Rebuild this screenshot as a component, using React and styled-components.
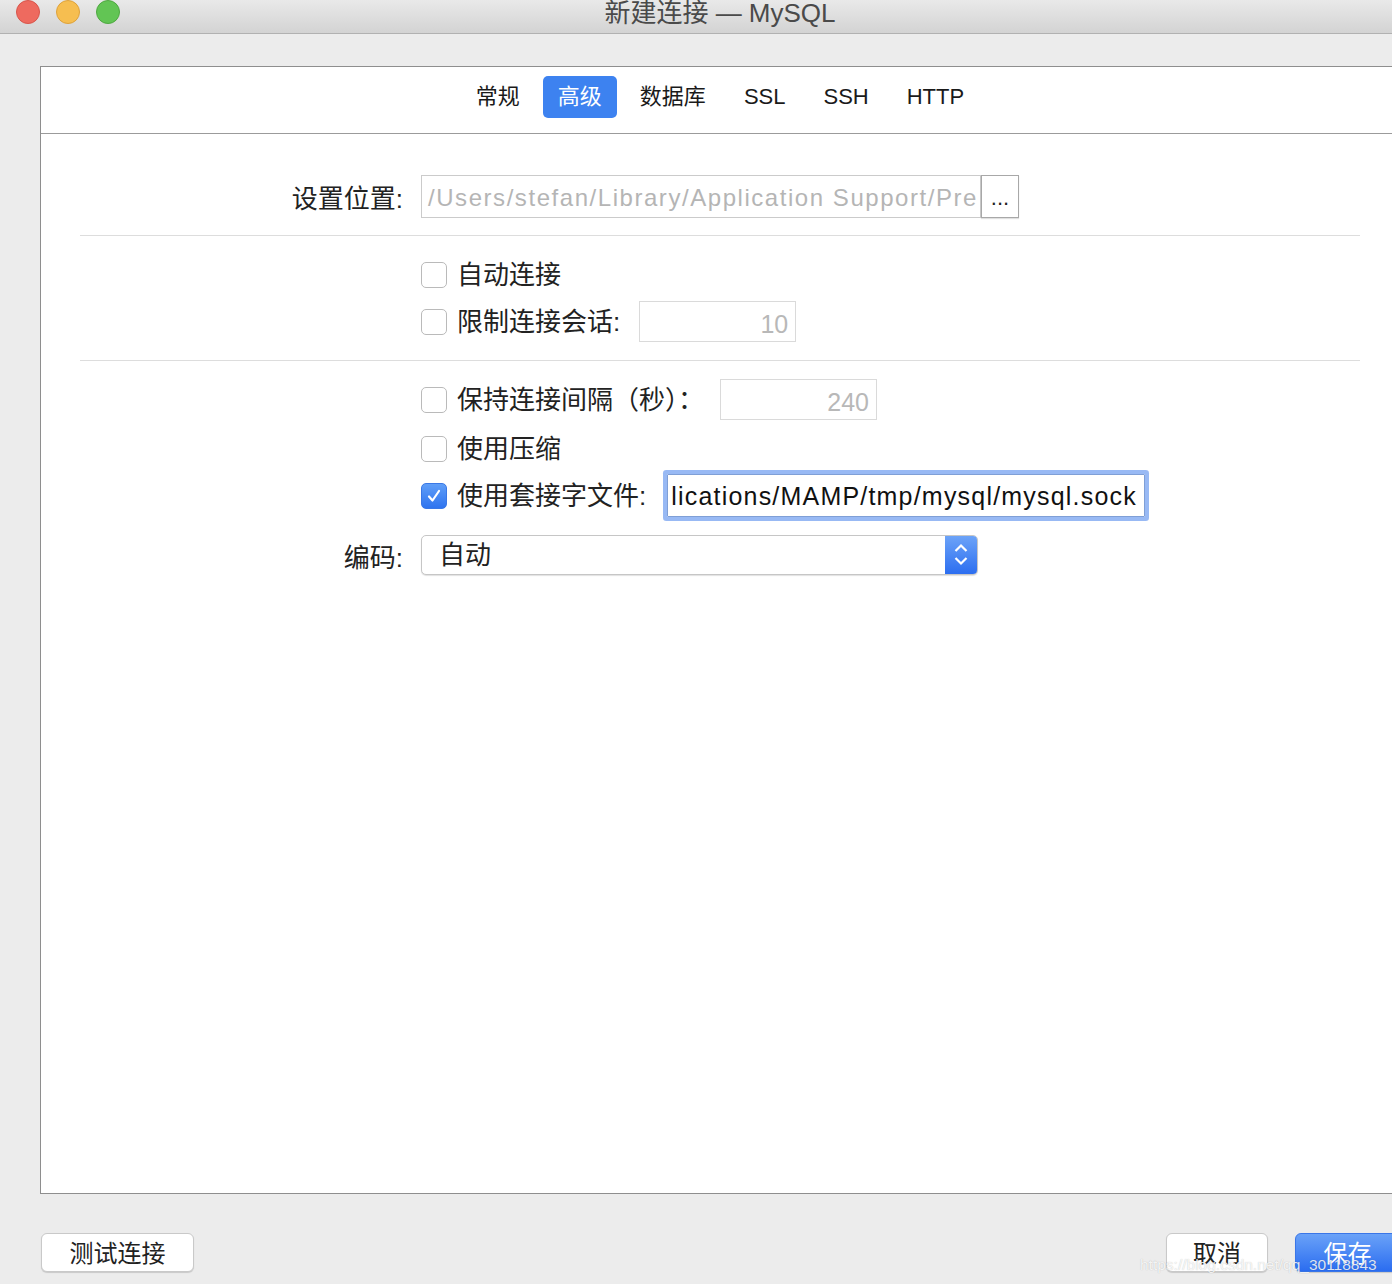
import React from 'react';
import styled, { createGlobalStyle } from 'styled-components';

const GlobalStyle = createGlobalStyle`
  html, body {
    margin: 0;
    padding: 0;
    background: #ececec;
    overflow: hidden;
  }
  body {
    font-family: "Liberation Sans", "Noto Sans CJK SC", sans-serif;
    color: #222;
  }
`;

const Window = styled.div`
  position: relative;
  width: 1440px;
  height: 1284px;
  display: flex;
  flex-direction: column;
  background: #ececec;
`;

const TitleBar = styled.div`
  height: 33px;
  flex-shrink: 0;
  display: grid;
  grid-template-columns: 1fr auto 1fr;
  align-items: start;
  border-bottom: 1px solid #b1b1b1;
  background: linear-gradient(#e9e9e9, #d3d3d3);
  overflow: hidden;
`;

const Lights = styled.div`
  display: flex;
  gap: 16px;
  padding-left: 16px;
`;

const Light = styled.span`
  width: 24px;
  height: 24px;
  border-radius: 50%;
  box-sizing: border-box;
  background: ${p => p.$c};
  border: 1px solid ${p => p.$b};
`;

const Title = styled.div`
  font-size: 26px;
  line-height: 26px;
  color: #4a4a4a;
`;

const Panel = styled.div`
  margin: 32px 40px 0;
  height: 1128px;
  box-sizing: border-box;
  background: #fff;
  border: 1px solid #8e8e8e;
  display: flex;
  flex-direction: column;
`;

const TabBar = styled.div`
  height: 67px;
  box-sizing: border-box;
  border-bottom: 1px solid #9b9b9b;
  display: flex;
  justify-content: center;
  align-items: flex-start;
  padding-top: 9px;
  gap: 8px;
`;

const Tab = styled.div`
  height: 42px;
  line-height: 42px;
  padding: 0 15px;
  font-size: 22px;
  border-radius: 5px;
  color: ${p => (p.$active ? '#fff' : '#1a1a1a')};
  background: ${p => (p.$active ? '#3d82f0' : 'transparent')};
`;

const Form = styled.div`
  display: flex;
  flex-direction: column;
  padding: 41px 39px 0;
`;

const Row = styled.div`
  display: grid;
  grid-template-columns: 323px 1fr;
  column-gap: 18px;
  align-items: center;
  height: ${p => p.$h}px;
  margin-top: ${p => p.$mt || 0}px;
`;

const Label = styled.div`
  text-align: right;
  font-size: 26px;
  color: #222;
`;

const Field = styled.div`
  display: flex;
  align-items: center;
  height: 100%;
`;

const Divider = styled.div`
  height: 1px;
  background: #dddddd;
  margin-top: ${p => p.$mt}px;
`;

const PathInput = styled.div`
  width: 560px;
  height: 43px;
  box-sizing: border-box;
  border: 1px solid #cbcbcb;
  padding-left: 6px;
  font-size: 24px;
  line-height: 43px;
  letter-spacing: 1.55px;
  color: #b5b5b5;
  white-space: nowrap;
  overflow: hidden;
`;

const DotsButton = styled.div`
  width: 38px;
  height: 43px;
  box-sizing: border-box;
  border: 1px solid #a8a8a8;
  background: #fff;
  box-shadow: 0 1px 1px rgba(0, 0, 0, 0.12);
  font-size: 22px;
  line-height: 44px;
  text-align: center;
  color: #222;
`;

const Box = styled.span`
  width: 26px;
  height: 26px;
  box-sizing: border-box;
  border-radius: 5px;
  flex-shrink: 0;
  display: flex;
  align-items: center;
  justify-content: center;
  border: 1px solid ${p => (p.$checked ? '#3a78e6' : '#bababa')};
  background: ${p => (p.$checked ? 'linear-gradient(#5f9ef8, #2f74ef)' : '#fff')};
`;

const CheckText = styled.span`
  margin-left: 10px;
  font-size: 26px;
  line-height: 30px;
  color: #222;
  white-space: nowrap;
`;

const NumberInput = styled.div`
  width: 157px;
  height: 41px;
  box-sizing: border-box;
  margin-left: ${p => p.$ml}px;
  border: 1px solid #dadada;
  padding-right: 7px;
  text-align: right;
  font-size: 25px;
  line-height: 44px;
  color: #b8b8b8;
`;

const SocketInput = styled.div`
  width: 478px;
  height: 43px;
  box-sizing: border-box;
  margin-left: 21px;
  border: 1px solid #7f9fd6;
  box-shadow: 0 0 0 4px #98b9f4;
  border-radius: 1px;
  padding-left: 3px;
  font-size: 25px;
  line-height: 43px;
  letter-spacing: 1.2px;
  color: #111;
  white-space: nowrap;
  overflow: hidden;
`;

const Select = styled.div`
  width: 557px;
  height: 40px;
  box-sizing: border-box;
  display: flex;
  border-radius: 5px;
  border: 1px solid #c6c6c6;
  box-shadow: 0 1px 1px rgba(0, 0, 0, 0.12);
  background: #fff;
  overflow: hidden;
`;

const SelectValue = styled.span`
  flex: 1;
  padding-left: 17px;
  font-size: 26px;
  line-height: 38px;
  color: #222;
`;

const Stepper = styled.span`
  width: 32px;
  display: flex;
  align-items: center;
  justify-content: center;
  background: linear-gradient(#6ca3f8, #2c6ef0);
`;

const Footer = styled.div`
  display: flex;
  justify-content: space-between;
  padding: 39px 40px 0 41px;
`;

const ButtonGroup = styled.div`
  display: flex;
  gap: 27px;
`;

const Button = styled.div`
  width: ${p => p.$w}px;
  height: 39px;
  box-sizing: border-box;
  border-radius: 6px;
  text-align: center;
  font-size: 24px;
  line-height: 39px;
  border: 1px solid ${p => (p.$primary ? '#3a76e8' : '#c9c9c9')};
  background: ${p => (p.$primary ? 'linear-gradient(#6aa2f8, #2b6df0)' : '#fff')};
  color: ${p => (p.$primary ? '#fff' : '#222')};
  box-shadow: 0 1px 1px rgba(0, 0, 0, 0.15);
`;

const Watermark = styled.div`
  position: absolute;
  left: 1140px;
  top: 1254px;
  font-size: 15.5px;
  line-height: 22px;
  color: rgba(255, 255, 255, 0.85);
  text-shadow: 0 0 1px rgba(0, 0, 0, 0.25);
  white-space: nowrap;
`;

const Check = ({ checked }) => (
  <Box $checked={checked}>
    {checked && (
      <svg width="18" height="18" viewBox="0 0 18 18">
        <polyline points="4,9.5 7.5,13.5 14,4" fill="none" stroke="#fff" strokeWidth="2.2" strokeLinecap="round" strokeLinejoin="round" />
      </svg>
    )}
  </Box>
);

const Chevrons = () => (
  <svg width="18" height="34" viewBox="0 0 18 34">
    <path d="M3.5 13 L9 7.5 L14.5 13" fill="none" stroke="#fff" strokeWidth="2.2" />
    <path d="M3.5 20 L9 25.5 L14.5 20" fill="none" stroke="#fff" strokeWidth="2.2" />
  </svg>
);

const tabs = ['常规', '高级', '数据库', 'SSL', 'SSH', 'HTTP'];

export default function App() {
  return (
    <Window>
      <GlobalStyle />
      <TitleBar>
        <Lights>
          <Light $c="#ee6a5f" $b="#d8554b" />
          <Light $c="#f6be50" $b="#dea23b" />
          <Light $c="#62c554" $b="#4fa841" />
        </Lights>
        <Title>新建连接 — MySQL</Title>
        <span />
      </TitleBar>

      <Panel>
        <TabBar>
          {tabs.map(t => (
            <Tab key={t} $active={t === '高级'}>{t}</Tab>
          ))}
        </TabBar>

        <Form>
          <Row $h={43}>
            <Label>设置位置:</Label>
            <Field>
              <PathInput>/Users/stefan/Library/Application Support/Pre</PathInput>
              <DotsButton>...</DotsButton>
            </Field>
          </Row>
          <Divider $mt={17} />

          <Row $h={41} $mt={18}>
            <span />
            <Field>
              <Check />
              <CheckText>自动连接</CheckText>
            </Field>
          </Row>
          <Row $h={41} $mt={6}>
            <span />
            <Field>
              <Check />
              <CheckText>限制连接会话:</CheckText>
              <NumberInput $ml={19}>10</NumberInput>
            </Field>
          </Row>
          <Divider $mt={18} />

          <Row $h={41} $mt={18}>
            <span />
            <Field>
              <Check />
              <CheckText>保持连接间隔（秒）：</CheckText>
              <NumberInput $ml={16}>240</NumberInput>
            </Field>
          </Row>
          <Row $h={41} $mt={8}>
            <span />
            <Field>
              <Check />
              <CheckText>使用压缩</CheckText>
            </Field>
          </Row>
          <Row $h={51} $mt={1}>
            <span />
            <Field>
              <Check checked />
              <CheckText>使用套接字文件:</CheckText>
              <SocketInput>lications/MAMP/tmp/mysql/mysql.sock</SocketInput>
            </Field>
          </Row>
          <Row $h={40} $mt={14}>
            <Label>编码:</Label>
            <Field>
              <Select>
                <SelectValue>自动</SelectValue>
                <Stepper><Chevrons /></Stepper>
              </Select>
            </Field>
          </Row>
        </Form>
      </Panel>

      <Footer>
        <Button $w={153}>测试连接</Button>
        <ButtonGroup>
          <Button $w={102}>取消</Button>
          <Button $w={105} $primary>保存</Button>
        </ButtonGroup>
      </Footer>

      <Watermark>https://blog.csdn.net/qq_30118843</Watermark>
    </Window>
  );
}
